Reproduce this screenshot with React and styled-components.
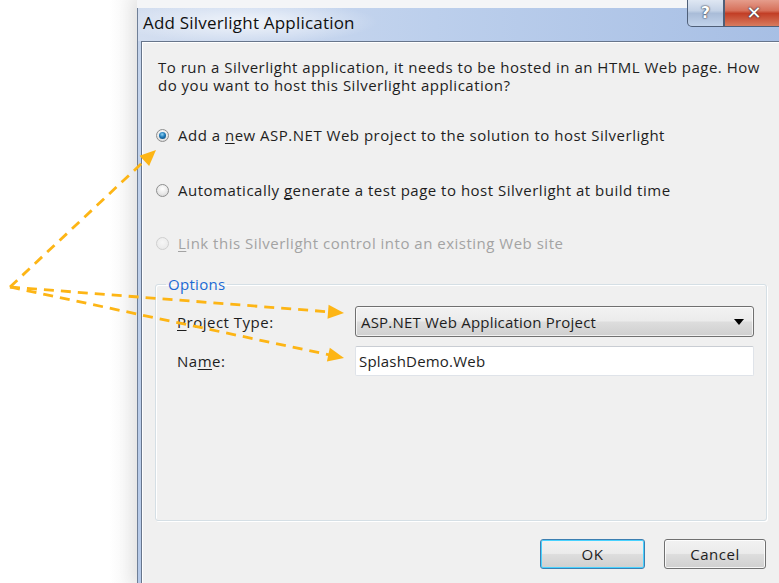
import styled, { createGlobalStyle } from 'styled-components';

const GlobalStyle = createGlobalStyle`
	html, body {
		margin: 0;
		padding: 0;
		background: #ffffff;
		overflow: hidden;
	}

	u {
		text-decoration-skip-ink: none;
		text-underline-offset: 2px;
	}
`;

const Page = styled.div`
	position: relative;
	width: 779px;
	height: 583px;
	overflow: hidden;
	display: flex;
	padding-left: 137px;
	box-sizing: border-box;
	background: linear-gradient(to right, #ffffff 0, #ffffff 110px, #f2f2f2 137px);
	font-family: 'Open Sans', 'Noto Sans', sans-serif;
`;

const Window = styled.div`
	position: relative;
	flex: none;
	width: 660px;
	display: flex;
	flex-direction: column;
	border-left: 1px solid #6f7f97;
	background: linear-gradient(to bottom, #c6d5ec, #b5c9e8);
	box-shadow: -6px 0 14px rgba(0, 0, 0, 0.06);
`;

const TopStrip = styled.div`
	height: 8px;
	background: #f4f5f7;
	margin-left: -1px;
`;

const TitleBar = styled.div`
	height: 33px;
	box-sizing: border-box;
	display: flex;
	align-items: center;
	padding: 0 0 5px 5px;
	background:
		radial-gradient(ellipse 130px 22px at 110px 14px, rgba(255, 255, 255, 0.75), rgba(255, 255, 255, 0)),
		linear-gradient(to right, #d3def0 0, #bccfec 45%, #a6bee4 100%);
	font-size: 17px;
	letter-spacing: 0.2px;
	color: #101010;
`;

const CaptionButton = styled.div`
	position: absolute;
	top: -2px;
	height: 29px;
	display: flex;
	align-items: center;
	justify-content: center;
	border: 1px solid #4f5f78;
	border-top: none;
	box-sizing: border-box;
	color: #ffffff;
	font-family: 'DejaVu Sans', sans-serif;
	font-weight: bold;
	text-shadow: 0 0 1px #2c3340, 0 0 2px #2c3340;
	left: ${p => p.left}px;
	width: ${p => p.width}px;
	border-radius: ${p => (p.first ? '0 0 0 5px' : '0')};
	background: ${p =>
		p.close
			? 'linear-gradient(to bottom, #e8a595 0, #d6705a 45%, #c23e26 55%, #d87b5e 100%)'
			: 'linear-gradient(to bottom, #e4ebf5 0, #c4d2e6 45%, #a9bcd8 55%, #c2d3eb 100%)'};
	font-size: ${p => (p.close ? 18 : 16)}px;
`;

const Client = styled.div`
	flex: 1;
	margin-left: 3px;
	background: #f0f0f0;
	border-top: 1px solid #67758b;
	border-left: 1px solid #67758b;
	box-shadow: inset 1px 1px 0 #ffffff;
	padding: 16px 0 0 16px;
	color: #1e1e1e;
	font-size: 15px;
	letter-spacing: 0.5px;
`;

const Intro = styled.p`
	margin: 0;
	width: 612px;
	line-height: 18px;
`;

const Choices = styled.div`
	display: flex;
	flex-direction: column;
	gap: 35px;
	margin-top: 32px;
`;

const RadioRow = styled.label`
	display: flex;
	align-items: center;
	height: 18px;
	gap: 9px;
	color: ${p => (p.disabled ? '#a3a3a3' : '#1e1e1e')};
	margin-top: ${p => p.shift || 0}px;
`;

const RadioDot = styled.span`
	flex: none;
	width: 13px;
	height: 13px;
	border-radius: 50%;
	box-sizing: border-box;
	border: 1px solid ${p => (p.disabled ? '#cfcfcf' : '#8e8f8f')};
	background: ${p =>
		p.disabled
			? 'radial-gradient(circle at 50% 40%, #f6f6f6, #e6e6e6)'
			: 'radial-gradient(circle at 50% 35%, #ffffff 0, #e9e9e9 55%, #cfcfcf 100%)'};
	display: flex;
	align-items: center;
	justify-content: center;
	margin-left: -2px;

	&::after {
		content: '';
		width: 7px;
		height: 7px;
		border-radius: 50%;
		display: ${p => (p.checked ? 'block' : 'none')};
		background: radial-gradient(circle at 45% 35%, #8fd3f5 0, #1f7ab8 45%, #0b3f6b 100%);
	}
`;

const Group = styled.fieldset`
	margin: 22px 0 0 -3px;
	padding: 12px 0 0 21px;
	width: 612px;
	height: 247px;
	box-sizing: border-box;
	border: 1px solid #d5dfe5;
	border-radius: 3px;
	box-shadow: inset 1px 1px 0 #ffffff, 1px 1px 0 #ffffff;
`;

const Legend = styled.legend`
	padding: 0 2px;
	margin-left: -11px;
	color: #1c6ad4;
	font-size: 15px;
	letter-spacing: 0.3px;
`;

const FieldGrid = styled.div`
	display: grid;
	grid-template-columns: 178px 399px;
	grid-auto-rows: 31px;
	row-gap: 8px;
	align-items: center;
`;

const Select = styled.div`
	height: 31px;
	box-sizing: border-box;
	display: flex;
	align-items: center;
	justify-content: space-between;
	padding: 0 9px 0 5px;
	border: 1px solid #707070;
	border-radius: 3px;
	background: linear-gradient(to bottom, #f2f2f2 0, #ebebeb 48%, #dddddd 52%, #cfcfcf 100%);
	box-shadow: inset 0 0 0 1px rgba(255, 255, 255, 0.7);
	letter-spacing: 0.2px;
`;

const Caret = styled.span`
	width: 0;
	height: 0;
	border-left: 5px solid transparent;
	border-right: 5px solid transparent;
	border-top: 6px solid #000000;
`;

const TextBox = styled.div`
	height: 30px;
	box-sizing: border-box;
	display: flex;
	align-items: center;
	padding-left: 3px;
	background: #ffffff;
	border: 1px solid #dfe3e9;
	border-top-color: #c9cdd3;
	border-radius: 2px;
	letter-spacing: 0.2px;
`;

const Footer = styled.div`
	display: flex;
	gap: 19px;
	margin: 18px 0 0 382px;
`;

const Button = styled.div`
	width: ${p => p.width}px;
	height: 30px;
	box-sizing: border-box;
	display: flex;
	align-items: center;
	justify-content: center;
	border-radius: 3px;
	border: 1px solid ${p => (p.focused ? '#3c7fb1' : '#707070')};
	background: linear-gradient(to bottom, #f2f2f2 0, #ebebeb 48%, #dddddd 52%, #cfcfcf 100%);
	box-shadow: inset 0 0 0 1px ${p => (p.focused ? '#48d2ff' : 'rgba(255, 255, 255, 0.8)')};
	color: #1e1e1e;
`;

const Overlay = styled.svg`
	position: absolute;
	left: 0;
	top: 0;
	pointer-events: none;
`;

const ARROW = '#fdb515';

const arrows = [
	{ from: [10, 287], to: [156, 150] },
	{ from: [10, 287], to: [344, 313] },
	{ from: [10, 287], to: [344, 358] },
];

const ArrowHead = ({ from, to }) => {
	const [x1, y1] = from;
	const [x2, y2] = to;
	const a = Math.atan2(y2 - y1, x2 - x1);
	const len = 16;
	const half = 7;
	const bx = x2 - Math.cos(a) * len;
	const by = y2 - Math.sin(a) * len;
	const px = -Math.sin(a) * half;
	const py = Math.cos(a) * half;
	return (
		<polygon
			points={`${x2},${y2} ${bx + px},${by + py} ${bx - px},${by - py}`}
			fill={ARROW}
		/>
	);
};

const Callouts = () => (
	<Overlay width="779" height="583" viewBox="0 0 779 583">
		{arrows.map(({ from, to }, i) => {
			const a = Math.atan2(to[1] - from[1], to[0] - from[0]);
			const ex = to[0] - Math.cos(a) * 12;
			const ey = to[1] - Math.sin(a) * 12;
			return (
				<g key={i}>
					<line
						x1={from[0]}
						y1={from[1]}
						x2={ex}
						y2={ey}
						stroke={ARROW}
						strokeWidth="2.8"
						strokeDasharray="10 7"
					/>
					<ArrowHead from={from} to={to} />
				</g>
			);
		})}
	</Overlay>
);

const App = () => (
	<>
		<GlobalStyle />
		<Page>
			<Window>
				<TopStrip />
				<TitleBar>Add Silverlight Application</TitleBar>
				<CaptionButton left={549} width={37} first>?</CaptionButton>
				<CaptionButton left={586} width={60} close>✕</CaptionButton>
				<Client>
					<Intro>
						To run a Silverlight application, it needs to be hosted in an HTML Web page. How
						do you want to host this Silverlight application?
					</Intro>
					<Choices>
						<RadioRow>
							<RadioDot checked />
							<span>
								Add a <u>n</u>ew ASP.NET Web project to the solution to host Silverlight
							</span>
						</RadioRow>
						<RadioRow shift={2}>
							<RadioDot />
							<span>
								Automatically <u>g</u>enerate a test page to host Silverlight at build time
							</span>
						</RadioRow>
						<RadioRow disabled>
							<RadioDot disabled />
							<span>
								<u>L</u>ink this Silverlight control into an existing Web site
							</span>
						</RadioRow>
					</Choices>
					<Group>
						<Legend>Options</Legend>
						<FieldGrid>
							<span>
								<u>P</u>roject Type:
							</span>
							<Select>
								<span>ASP.NET Web Application Project</span>
								<Caret />
							</Select>
							<span>
								Na<u>m</u>e:
							</span>
							<TextBox>SplashDemo.Web</TextBox>
						</FieldGrid>
					</Group>
					<Footer>
						<Button width={105} focused>OK</Button>
						<Button width={102}>Cancel</Button>
					</Footer>
				</Client>
			</Window>
			<Callouts />
		</Page>
	</>
);

export default App;
